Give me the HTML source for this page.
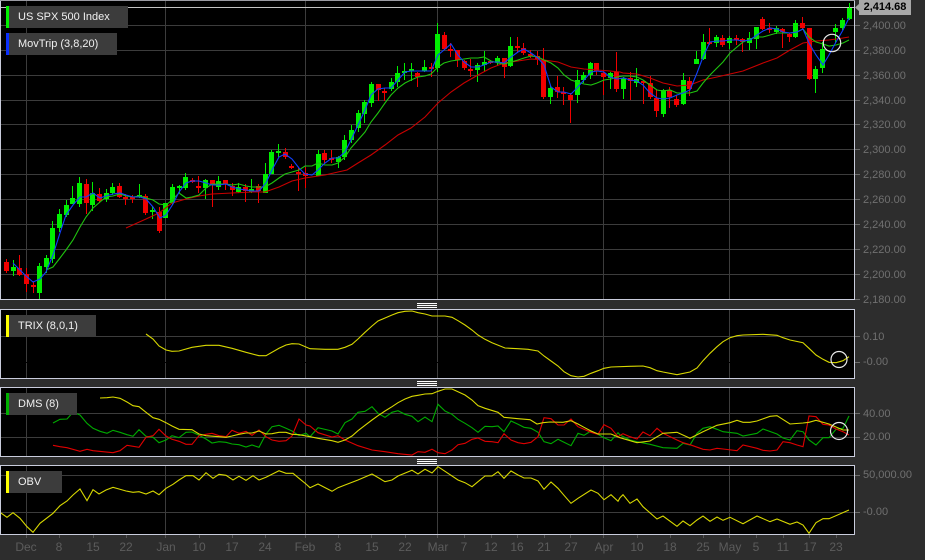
<!DOCTYPE html>
<html><head><meta charset="utf-8"><style>
html,body{margin:0;padding:0;background:#2d2d2d}
#c{position:relative;width:925px;height:560px;overflow:hidden;background:#2d2d2d;font-family:"Liberation Sans",Arial,sans-serif}
svg{position:absolute;left:0;top:0}
.l{position:absolute;background:#3c3c3c;color:#f0f0f0;font-size:11px;line-height:22px;height:22px;left:6px;padding-left:12px;box-sizing:border-box;white-space:nowrap}
.l i{position:absolute;left:0;top:0;width:3px;height:22px}
.y{position:absolute;left:863px;color:#707070;font-size:11px;line-height:14px;white-space:nowrap}
.x{position:absolute;top:540px;width:40px;text-align:center;color:#5c5c5c;font-size:12px;line-height:14px}
#tag{position:absolute;left:859px;top:0;width:52px;height:15px;background:#a8a8a8;color:#000;font-weight:bold;font-size:11px;line-height:15px;text-align:center}
.g{position:absolute;left:417px;width:20px;height:5px;background:repeating-linear-gradient(#fff 0 1px,#3a3a3a 1px 2px)}
</style></head><body><div id="c">
<svg width="925" height="560" viewBox="0 0 925 560" fill="none">
<rect x="0" y="1" width="854" height="299" fill="#000"/>
<rect x="0" y="309" width="854" height="69" fill="#000"/>
<rect x="0" y="387" width="854" height="69" fill="#000"/>
<rect x="0" y="465" width="854" height="70" fill="#000"/>
<path stroke="#3c3c3c" d="M1 25.5H854M1 50.5H854M1 75.5H854M1 100.5H854M1 124.5H854M1 149.5H854M1 174.5H854M1 199.5H854M1 224.5H854M1 249.5H854M1 274.5H854M1 336.5H854M1 413.5H854M1 437.5H854M1 475.5H854M1 512.5H854"/>
<path stroke="#3c3c3c" d="M26.5 1V300M165.5 1V300M305.5 1V300M437.5 1V300M603.5 1V300M729.5 1V300M26.5 309V378M165.5 309V378M305.5 309V378M437.5 309V378M603.5 309V378M729.5 309V378M26.5 387V456M165.5 387V456M305.5 387V456M437.5 387V456M603.5 387V456M729.5 387V456M26.5 465V535M165.5 465V535M305.5 465V535M437.5 465V535M603.5 465V535M729.5 465V535"/>
<path stroke="#000" d="M1 362.5H854"/>
<path stroke="#c4c4c4" d="M1 7.5H854"/>
<!-- wicks -->
<path stroke="#f00000" d="M6.5 259V273M19.5 255V276M26.5 268V292M33.5 282V293M86.5 179V214M99.5 188V203M119.5 183V198M125.5 194V205M132.5 195V203M145.5 194V215M159.5 207V233M192.5 178V183M198.5 176V193M212.5 180V207M225.5 180V190M232.5 183V196M245.5 184V202M258.5 184V203M285.5 148V159M291.5 164V169M298.5 168V191M305.5 167V188M324.5 150V163M331.5 150V163M378.5 84V101M384.5 88V101M417.5 72V87M431.5 63V77M444.5 32V50M450.5 43V57M457.5 50V67M464.5 60V70M470.5 59V77M490.5 60V64M504.5 58V78M517.5 37V53M523.5 43V55M530.5 50V58M537.5 51V65M543.5 48V99M557.5 76V98M563.5 87V105M570.5 93V123M596.5 63V75M603.5 70V95M616.5 52V92M630.5 72V100M643.5 80V104M650.5 76V99M656.5 90V117M669.5 87V108M676.5 95V107M689.5 77V96M709.5 28V45M722.5 35V47M736.5 35V45M742.5 38V52M762.5 17V30M769.5 23V33M782.5 28V48M789.5 33V42M802.5 17V30M809.5 28V80"/>
<path stroke="#00ee00" d="M13.5 260V276M39.5 263V299M46.5 255V273M52.5 221V263M59.5 209V232M66.5 200V217M72.5 186V204M79.5 177V207M92.5 182V211M106.5 189V202M112.5 183V195M139.5 184V198M152.5 206V219M165.5 203V218M172.5 184V205M179.5 185V193M185.5 173V190M205.5 179V199M218.5 176V190M238.5 183V193M251.5 179V193M265.5 163V193M271.5 150V174M278.5 144V157M318.5 150V176M338.5 156V168M344.5 135V160M351.5 125V143M358.5 110V132M364.5 100V123M371.5 82V107M391.5 78V91M397.5 66V87M404.5 63V80M411.5 63V81M424.5 60V72M437.5 23V72M477.5 63V82M484.5 51V72M497.5 56V66M510.5 37V67M550.5 86V104M577.5 70V103M583.5 72V83M590.5 62V79M610.5 72V89M623.5 77V99M636.5 68V87M663.5 89V117M683.5 73V105M696.5 51V64M703.5 34V60M716.5 35V47M729.5 36V49M749.5 32V50M756.5 27V49M776.5 26V34M795.5 20V38M815.5 66V93M822.5 42V73M835.5 24V43M842.5 18V30M849.5 3V20"/>
<!-- bodies -->
<path stroke="#f00000" stroke-width="5" d="M6.5 262V271M19.5 268V275M26.5 274V284M33.5 285V287M86.5 184V203M99.5 194V201M119.5 186V197M125.5 197V199M132.5 197V199M145.5 196V213M159.5 212V231M192.5 180V182M198.5 186V188M212.5 180V184M225.5 180V184M232.5 186V190M245.5 187V191M258.5 186V191M285.5 152V157M291.5 166V168M298.5 172V174M305.5 173V176M324.5 153V160M331.5 158V160M378.5 84V90M384.5 91V93M417.5 73V77M431.5 67V69M444.5 35V49M450.5 49V51M457.5 50V60M464.5 61V68M470.5 69V71M490.5 61V63M504.5 58V67M517.5 46V48M523.5 48V53M530.5 54V56M537.5 56V59M543.5 60V97M557.5 87V92M563.5 92V94M570.5 95V100M596.5 63V71M603.5 73V77M616.5 72V89M630.5 78V81M643.5 81V83M650.5 83V97M656.5 98V111M669.5 90V97M676.5 99V105M689.5 81V89M709.5 42V44M722.5 38V45M736.5 38V40M742.5 39V42M762.5 19V29M769.5 28V30M782.5 29V32M789.5 34V37M802.5 23V28M809.5 28V79"/>
<path stroke="#00ee00" stroke-width="5" d="M13.5 267V271M39.5 266V293M46.5 258V267M52.5 228V259M59.5 214V228M66.5 205V215M72.5 198V204M79.5 183V204M92.5 193V205M106.5 193V199M112.5 187V193M139.5 195V197M152.5 210V212M165.5 203V218M172.5 187V203M179.5 186V188M185.5 177V188M205.5 180V188M218.5 181V187M238.5 187V192M251.5 189V192M265.5 174V193M271.5 152V174M278.5 151V153M318.5 154V176M338.5 157V162M344.5 140V157M351.5 130V140M358.5 113V128M364.5 102V114M371.5 84V103M391.5 82V89M397.5 73V82M404.5 71V73M411.5 69V71M424.5 67V71M437.5 34V68M477.5 65V70M484.5 62V65M497.5 58V62M510.5 46V66M550.5 88V97M577.5 80V95M583.5 75V80M590.5 63V75M610.5 73V78M623.5 78V89M636.5 79V83M663.5 90V114M683.5 80V104M696.5 59V64M703.5 42V59M716.5 37V43M729.5 38V43M749.5 38V43M756.5 27V39M776.5 28V32M795.5 23V37M815.5 69V79M822.5 49V68M835.5 28V32M842.5 20V28M849.5 8V19"/>
<!-- MAs -->
<polyline stroke="#c80000" stroke-width="1.1" points="126,228 146,219 159,213 172,203 186,199 199,196 212,194 232,193 252,192 265,192 279,187 292,181 305,178 325,175 338,172 347,170 358,163 371,155 385,145 398,135 411,128 425,117 438,103 451,92 464,83 478,75 491,68 504,63 518,61 531,59 544,60 558,62 571,67 584,69 597,70 610,71 620,72 623,73 637,74 650,78 663,83 677,86 690,85 703,80 717,77 730,74 743,71 763,63 777,58 790,50 803,43 816,41 829,40 843,38 849,37"/>
<polyline stroke="#1fc40f" stroke-width="1.1" points="46,270 53,267 60,258 66,250 73,240 80,227 86,217 93,208 100,202 106,197 113,196 120,194 126,196 133,197 140,196 146,198 153,200 159,204 166,205 172,200 179,193 186,198 192,197 199,195 206,188 212,184 219,184 226,184 232,185 239,184 246,186 252,187 259,187 265,187 272,183 279,178 285,174 292,172 299,170 305,166 312,166 318,163 325,165 332,165 338,163 345,157 351,148 358,140 365,132 371,122 378,113 385,103 391,95 398,88 405,83 411,80 418,77 425,76 431,74 438,67 444,63 451,61 458,60 464,59 471,58 478,58 484,57 491,61 498,63 504,64 511,62 518,60 524,58 531,56 538,57 544,60 551,63 558,68 564,75 571,80 577,82 584,84 591,85 597,83 604,80 611,79 617,77 623,76 630,76 637,77 643,80 650,85 657,90 663,91 670,90 677,93 683,93 690,93 697,91 703,83 710,75 717,68 723,62 730,53 737,47 743,42 750,39 757,37 763,37 770,35 777,33 783,33 790,33 797,32 803,29 809,37 816,42 823,44 829,46 836,45 843,43 849,40"/>
<polyline stroke="#1040ff" stroke-width="1.1" points="13,263 20,270 26,276 33,282 40,279 46,272 53,255 60,233 66,215 73,205 80,197 86,197 93,193 100,198 106,196 113,194 120,193 126,195 133,197 140,197 146,199 153,207 160,218 166,215 173,204 179,192 186,183 192,181 199,181 206,183 212,185 219,185 226,184 232,187 239,189 246,190 252,191 259,191 266,183 272,170 279,157 285,154 292,159 299,168 305,174 312,175 318,170 325,163 332,158 338,158 345,152 351,140 358,125 365,110 371,95 378,89 385,88 391,88 398,80 405,72 411,71 418,71 425,71 431,71 438,55 444,50 451,44 458,55 464,62 471,67 478,67 484,65 491,62 498,62 504,63 511,57 518,52 524,49 531,53 538,58 544,65 551,87 558,92 564,92 571,94 577,88 584,80 591,72 597,71 604,72 610,77 617,79 624,78 630,80 637,81 643,85 650,93 657,98 663,99 670,98 677,95 683,93 690,90 697,73 703,57 710,42 717,41 723,41 730,40 737,40 743,41 750,40 757,35 763,31 770,28 777,29 783,32 790,33 797,32 803,29 809,43 816,55 823,65 829,55 836,42 843,30 849,18"/>
<!-- TRIX -->
<polyline stroke="#d8d800" stroke-width="1.1" points="146,334 153,339 159,346 166,350 172,351.3 179,351 192,347.3 206,345.3 219,345.3 232,348.3 246,352.3 259,355.7 266,355.7 279,348.3 286,345 292,343.7 299,344 310,348.7 325,349.3 338,349.3 345,347.3 352,344.3 358,339 365,332.3 372,326 378,321 385,318 392,315 398,312.7 405,311.3 412,311 418,312.7 425,314 432,316 445,316 452,317.3 458,320.7 465,325 472,330 478,335 485,339.3 492,342.7 505,348 518,348.7 528,349.3 538,351 544,356 551,361 558,366 564,371.7 571,375.7 578,377 584,376.3 591,373.3 598,370.7 604,368.3 611,367 630,366.3 643,366 650,367.7 657,370.7 663,372 677,374.7 690,372 697,368 703,360.7 710,353.3 717,346.7 723,341.7 730,337.7 737,335.7 743,335 763,334.3 777,335.3 783,337.7 790,340 803,342.7 809,348.3 816,355 823,359.3 829,362.3 836,362.7 843,360.7 849,356.7"/>
<!-- DMS -->
<polyline stroke="#00aa00" stroke-width="1.1" points="53,423 60,419.3 67,419 73,412.3 80,415 87,423.3 93,428.3 100,431.3 107,433.3 113,430.3 120,432.3 127,434.7 133,436.3 139,429.7 146,436.3 153,437.3 159,442.7 166,440 172,435.7 179,437.7 186,432.3 192,432 199,435.3 206,439 212,443 219,441.7 226,442.3 232,444 239,444.7 246,447 252,445 259,447.3 266,434 272,426.7 279,425.3 286,428.3 292,431 299,435.7 306,433.3 310,436.7 318,427.7 332,431 338,434 345,422.7 352,419 358,412.3 365,411.3 372,406.7 378,413.3 385,417.3 392,412.3 398,410.7 405,414.3 412,416.3 418,421.7 425,417 432,421.7 438,404.3 445,411 452,414.3 458,419.3 465,423.3 472,427.7 478,432.3 485,426.3 492,426.7 498,426 504,431.7 511,421 518,424.3 524,427.3 531,428.3 538,432.3 544,441.7 551,443.7 558,439.3 564,442.3 571,445.7 578,433.3 584,435.3 591,431 598,434.3 604,437.7 611,440.7 618,432.7 620,435 630,440 637,441.7 650,444.3 663,447.7 677,448.3 683,443.3 690,445 697,433.3 703,428.3 710,426.7 717,429.3 723,431.7 737,433.3 743,436 757,433.3 763,429 777,434 783,438 790,440 797,430.7 803,431.7 809,440 816,445 823,437.7 829,437.7 836,429.3 843,428.3 849,416"/>
<polyline stroke="#e00000" stroke-width="1.1" points="53,445.3 60,446.7 67,447.7 80,451.3 87,449.3 93,450.7 113,452.7 120,450.7 127,445.3 139,447.3 146,437.3 153,435.7 159,429.3 166,436 172,439.3 179,441.3 186,444.3 192,444.3 199,435.7 206,434.3 212,433.3 219,435.7 226,436.7 232,430.3 239,433.3 246,431.3 252,435.3 259,430 266,436.7 272,440 279,441.3 286,440.7 292,436 299,419 306,425 310,426 318,432.7 332,437 338,435.7 345,440 358,445.7 372,450 385,451.7 398,453.7 412,455 418,451.7 425,452.3 432,449.3 438,452.7 445,453.7 452,450 458,444.7 465,443.3 472,439.3 478,438 485,441.3 492,441.7 498,442.7 504,433.7 511,440 518,442.7 524,443.7 531,442.3 538,436.7 544,417.7 551,418.7 558,425 564,425 571,419 578,426.7 584,429.3 591,432.3 598,434.3 604,424.7 611,428.3 618,436.7 623,433.7 630,436.7 637,439 643,432 650,435.7 657,428.3 663,433.3 677,440 683,442.7 690,444.7 703,449.3 710,450 717,448.3 723,449 737,450.7 743,445 757,448.3 763,450.3 770,451 777,450 783,441.7 790,442.7 797,445 803,446.7 809,416 816,416.7 823,424.3 829,425 836,429 843,431.7 849,435"/>
<polyline stroke="#d8d800" stroke-width="1.1" points="100,398 107,397.7 113,397 120,398.3 127,402 133,405.7 139,406.7 146,412.3 153,417.7 159,419.3 166,422.7 172,426 179,429.3 192,429.7 199,434 206,435.7 219,436.7 226,437.3 232,436 239,434.3 246,433 252,433 259,431 266,434 272,433.7 279,432.3 286,432.3 292,434.3 299,434.7 310,436.7 318,438.3 332,440.7 338,442.3 345,440 352,436 358,430.7 365,425.3 372,420 378,415.7 385,411 392,406.7 398,402.7 405,399 412,396.3 418,395.3 425,394 432,393.7 438,391.3 445,389 452,389 458,391.7 465,395 472,400 478,405.7 485,408.3 498,412.3 504,417.3 518,418.7 530,419.7 537,424 543,422.7 550,422 563,422.3 571,420.7 578,424 584,427.3 591,431 598,434 611,434 620,437.7 637,442.7 650,441 663,433.3 677,432.3 690,438.3 703,431.7 717,425.3 730,422.7 737,420.3 743,422.3 750,422.3 757,421 770,416.3 777,415.7 790,424 803,423 809,422.3 816,420.3 829,424 843,430 849,430"/>
<!-- OBV -->
<polyline stroke="#d8d800" stroke-width="1.1" points="0,512.3 7,517.3 13,512.7 20,518.3 27,526.7 33,532.3 40,523.3 53,513.3 60,505.7 67,501 73,495 80,489 87,500.7 93,489.7 99,494 106,490 113,487.3 119,489 126,491 133,492.3 139,491.7 146,494 153,491 159,494.7 166,488.3 173,484.3 179,480 186,475.7 193,475.7 199,480 206,472.7 213,478.3 219,474.3 226,475.3 233,480 239,476.3 246,480.3 253,475.7 259,480 266,477.3 279,470.7 286,473.3 293,473.3 299,478.3 306,484 310,487.7 318,484 332,491.3 338,487.7 345,485 358,480 372,474 385,481.7 392,480 398,476 412,470.3 418,474 425,469.3 432,473 438,466.7 445,471.3 458,480 465,482.7 472,486.7 478,481.7 485,476 492,476 498,471.7 504,478.3 511,471 518,475 524,478 531,478 538,481 544,489.3 551,482 558,488.3 564,495.3 571,503.3 578,498.3 591,490 598,493.3 604,499.7 611,494.7 618,501.3 620,497.7 623,494.7 630,503.3 637,499 643,506.7 657,519 663,516 677,526.3 683,521 690,525.7 697,520 703,516 710,521.3 717,517 723,520.3 730,517.3 743,523.7 757,516 770,521.7 777,519 790,524.3 797,522 803,525 809,533.3 816,522.7 823,518.7 829,518.7 849,510"/>
<!-- circles -->
<circle cx="832" cy="43" r="8.7" stroke="#e8e8e8" stroke-width="1.2"/>
<circle cx="839" cy="359.5" r="8" stroke="#e8e8e8" stroke-width="1.2"/>
<circle cx="839" cy="431" r="8.5" stroke="#e8e8e8" stroke-width="1.2"/>
<!-- frames -->
<path stroke="#9a9aa2" d="M0 .5H855"/>
<path stroke="#c9ccdc" d="M.5 1V300M854.5 1V300M0 299.5H855M.5 309V378M854.5 309V378M0 309.5H855M0 378.5H855M.5 387V457M854.5 387V457M0 387.5H855M0 456.5H855M.5 465V535M854.5 465V535M0 465.5H855M0 534.5H855"/>
<!-- ticks -->
<path stroke="#6b6b6b" d="M855 25.5H860M855 50.5H860M855 75.5H860M855 100.5H860M855 124.5H860M855 149.5H860M855 174.5H860M855 199.5H860M855 224.5H860M855 249.5H860M855 274.5H860M855 299.5H860M855 336.5H860M855 362.5H860M855 413.5H860M855 437.5H860M855 475.5H860M855 512.5H860"/>
<path stroke="#555" d="M26.5 535V538M59.5 535V538M93.5 535V538M126.5 535V538M165.5 535V538M199.5 535V538M232.5 535V538M265.5 535V538M305.5 535V538M338.5 535V538M371.5 535V538M405.5 535V538M437.5 535V538M464.5 535V538M491.5 535V538M517.5 535V538M544.5 535V538M570.5 535V538M603.5 535V538M637.5 535V538M670.5 535V538M703.5 535V538M729.5 535V538M756.5 535V538M783.5 535V538M809.5 535V538M836.5 535V538"/>
<path fill="#a8a8a8" d="M855 7.5L860 3V12Z"/>
</svg>

<div class="g" style="top:303px"></div><div class="g" style="top:381px"></div><div class="g" style="top:459px"></div>

<div class="l" style="top:6px;width:122px"><i style="background:#00f000"></i>US SPX 500 Index</div>
<div class="l" style="top:33px;width:111px"><i style="background:#0a30ff"></i>MovTrip (3,8,20)</div>
<div class="l" style="top:315px;width:90px"><i style="background:#ffff00"></i>TRIX (8,0,1)</div>
<div class="l" style="top:393px;width:71px"><i style="background:#00b000"></i>DMS (8)</div>
<div class="l" style="top:471px;width:56px"><i style="background:#ffff00"></i>OBV</div>

<div id="tag">2,414.68</div>
<div class="y" style="top:19px">2,400.00</div><div class="y" style="top:44px">2,380.00</div><div class="y" style="top:69px">2,360.00</div><div class="y" style="top:94px">2,340.00</div><div class="y" style="top:118px">2,320.00</div><div class="y" style="top:143px">2,300.00</div><div class="y" style="top:168px">2,280.00</div><div class="y" style="top:193px">2,260.00</div><div class="y" style="top:218px">2,240.00</div><div class="y" style="top:243px">2,220.00</div><div class="y" style="top:268px">2,200.00</div><div class="y" style="top:293px">2,180.00</div>
<div class="y" style="top:330px">0.10</div><div class="y" style="top:355px">-0.00</div>
<div class="y" style="top:407px">40.00</div><div class="y" style="top:430px">20.00</div>
<div class="y" style="top:468px">50,000.00</div><div class="y" style="top:505px">-0.00</div>

<div class="x" style="left:6px">Dec</div><div class="x" style="left:39px">8</div><div class="x" style="left:73px">15</div><div class="x" style="left:106px">22</div><div class="x" style="left:146px">Jan</div><div class="x" style="left:179px">10</div><div class="x" style="left:212px">17</div><div class="x" style="left:245px">24</div><div class="x" style="left:285px">Feb</div><div class="x" style="left:318px">8</div><div class="x" style="left:352px">15</div><div class="x" style="left:385px">22</div><div class="x" style="left:418px">Mar</div><div class="x" style="left:444px">7</div><div class="x" style="left:471px">12</div><div class="x" style="left:497px">16</div><div class="x" style="left:524px">21</div><div class="x" style="left:551px">27</div><div class="x" style="left:584px">Apr</div><div class="x" style="left:617px">10</div><div class="x" style="left:650px">18</div><div class="x" style="left:683px">25</div><div class="x" style="left:710px">May</div><div class="x" style="left:736px">5</div><div class="x" style="left:763px">11</div><div class="x" style="left:790px">17</div><div class="x" style="left:816px">23</div>
</div></body></html>
